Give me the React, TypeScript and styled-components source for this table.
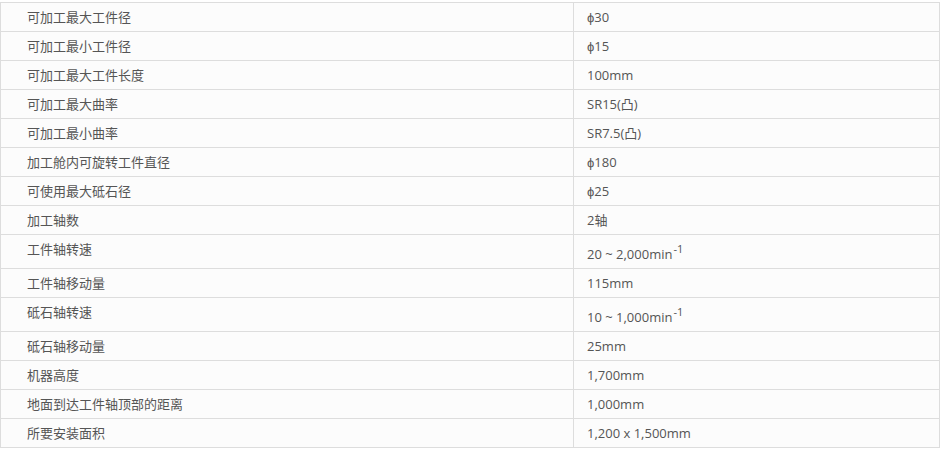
import React from "react";
import styled, { createGlobalStyle } from "styled-components";

const Global = createGlobalStyle`
  html, body { margin: 0; padding: 0; background: #ffffff; }
  body { font-family: "Open Sans", "Noto Sans CJK SC", sans-serif; }
`;

const Wrap = styled.div`
  padding-top: 2px;
  width: 940px;
`;

const Table = styled.table`
  width: 940px;
  border-collapse: collapse;
  table-layout: fixed;
  font-size: 13px;
  color: #555555;
`;

const Row = styled.tr`
  background: #fcfcfc;
`;

const Cell = styled.td<{ $label?: boolean }>`
  border: 1px solid #dddddd;
  padding: 4px 10px 4px ${(p) => (p.$label ? "26px" : "13px")};
  line-height: 20px;
  height: 20px;
  vertical-align: top;
  width: ${(p) => (p.$label ? "536px" : "auto")};
  white-space: nowrap;
`;

const Sup = styled.sup`
  font-size: 11px;
  line-height: 20px;
  vertical-align: 6px;
  margin-left: 1px;
`;

type Spec = { label: string; value: React.ReactNode };

const specs: Spec[] = [
  { label: "可加工最大工件径", value: "ϕ30" },
  { label: "可加工最小工件径", value: "ϕ15" },
  { label: "可加工最大工件长度", value: "100mm" },
  { label: "可加工最大曲率", value: "SR15(凸)" },
  { label: "可加工最小曲率", value: "SR7.5(凸)" },
  { label: "加工舱内可旋转工件直径", value: "ϕ180" },
  { label: "可使用最大砥石径", value: "ϕ25" },
  { label: "加工轴数", value: "2轴" },
  {
    label: "工件轴转速",
    value: (
      <>
        20 ~ 2,000min<Sup>-1</Sup>
      </>
    ),
  },
  { label: "工件轴移动量", value: "115mm" },
  {
    label: "砥石轴转速",
    value: (
      <>
        10 ~ 1,000min<Sup>-1</Sup>
      </>
    ),
  },
  { label: "砥石轴移动量", value: "25mm" },
  { label: "机器高度", value: "1,700mm" },
  { label: "地面到达工件轴顶部的距离", value: "1,000mm" },
  { label: "所要安装面积", value: "1,200 x 1,500mm" },
];

export default function App() {
  return (
    <Wrap>
      <Global />
      <Table>
        <tbody>
          {specs.map((s) => (
            <Row key={s.label}>
              <Cell $label>{s.label}</Cell>
              <Cell>{s.value}</Cell>
            </Row>
          ))}
        </tbody>
      </Table>
    </Wrap>
  );
}
